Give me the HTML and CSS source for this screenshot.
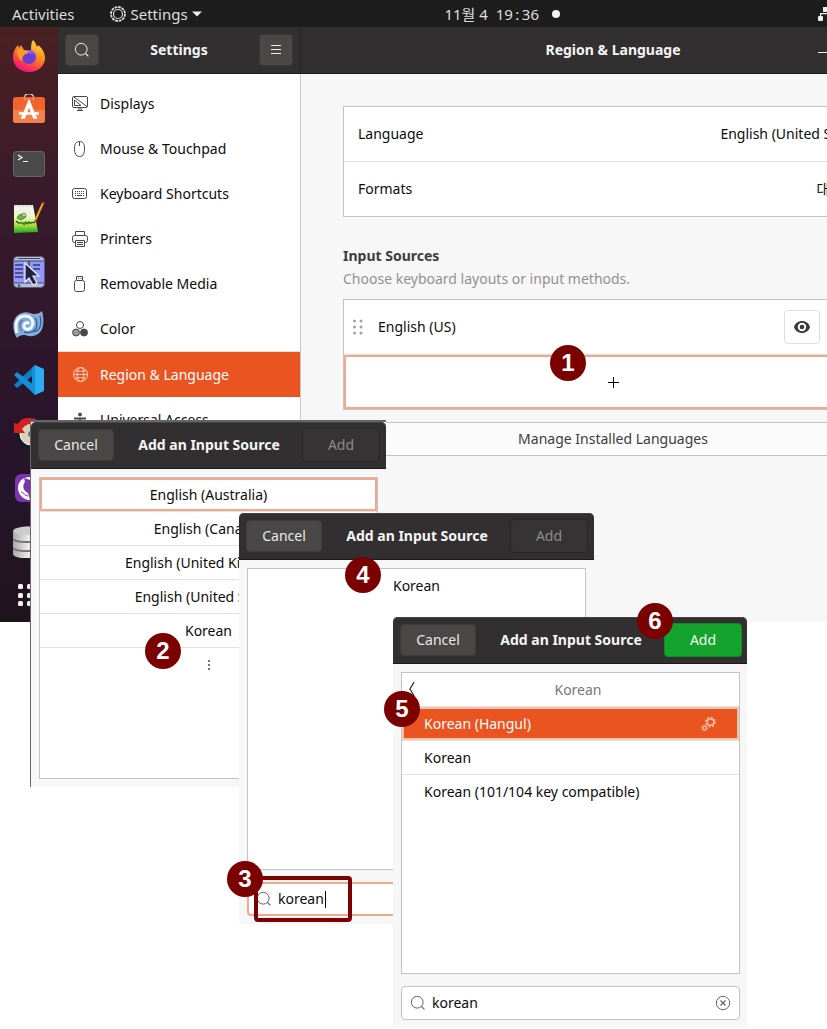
FILE: index.html
```html
<!DOCTYPE html>
<html lang="en">
<head>
<meta charset="utf-8">
<title>Region &amp; Language</title>
<link rel="stylesheet" href="styles.css">
</head>
<body>
<svg class="defs" aria-hidden="true">
  <symbol id="search" viewBox="0 0 16 16"><circle cx="7.2" cy="7.2" r="5.9" fill="none" stroke="currentColor"/><path d="M11.4 11.4l3 3" stroke="currentColor" stroke-width="1.3"/></symbol>
</svg>

<div class="desktop">
  <header class="topbar">
    <div class="topbar-left">
      <span>Activities</span>
      <span class="app-menu">
        <svg width="18" height="18" viewBox="0 0 18 18" fill="none" stroke="#ddd"><circle cx="9" cy="9" r="7" stroke-width="1.800" stroke-dasharray="2.8 0.86"/><circle cx="9" cy="9" r="4.500" stroke-width="1.2"/></svg>
        <span>Settings</span>
        <svg width="10" height="6" viewBox="0 0 10 6"><path d="M0 .5h10L5 5.5z" fill="#eee"/></svg>
      </span>
    </div>
    <div class="clock"><span>11월 4&nbsp; 19&thinsp;:&thinsp;36</span><i class="notice"></i></div>
    <svg class="net" width="16" height="14" viewBox="0 0 16 14" fill="#eee"><rect x="5" y="0" width="6" height="5"/><rect x="0" y="9" width="5" height="5" rx="1"/><rect x="11" y="9" width="5" height="5"/><path d="M2 9V6h12v3h-1.200V7.200H3.200V9z"/></svg>
  </header>

  <div class="workspace">
    <nav class="dock" aria-label="Dock">
      <svg viewBox="0 0 32 32">
        <defs><linearGradient id="fx" x1=".8" y1="0" x2=".3" y2="1"><stop offset="0" stop-color="#ffe43c"/><stop offset=".45" stop-color="#ff8b20"/><stop offset=".75" stop-color="#ff3d4b"/><stop offset="1" stop-color="#e2128b"/></linearGradient></defs>
        <path d="M20 0c2 2 3 4 4 7 1-1 1-2 1-2 4 3 7 8 7 13 0 8-7 14-16 14S0 26 0 17C0 12 2 8 5 5l1 3 2-3 3 5 7 0c0-4 0-7 2-10z" fill="url(#fx)"/>
        <circle cx="16" cy="17" r="7" fill="#6a3fd0"/><path d="M14 11c5-2 9 1 9 5-2-3-5-3-7-2z" fill="#9059ff"/>
        <path d="M4 10c3-1 6 0 7 1l5 0c0 2-3 3-5 4-2 2-2 4-1 6-4-1-6-5-6-11z" fill="#ff9a2a"/>
      </svg>
      <svg viewBox="0 0 32 32">
        <path d="M11 5c0-7 10-7 10 0" fill="none" stroke="#e8c9a0" stroke-width="1.500"/><rect y="3" width="32" height="26" rx="3" fill="#f2642c"/><path d="M0 16h32v10a3 3 0 0 1-3 3H3a3 3 0 0 1-3-3z" fill="#f37f4d"/>
        <path d="M12 4v2M20 4v2" stroke="#e8c9a0"/>
        <path d="M10.500 23L16 9l5.500 14" fill="none" stroke="#fff" stroke-width="3.500"/><path d="M6 19.500h20" stroke="#fff" stroke-width="2.500"/><path d="M8 23.500h4M20 23.500h4" stroke="#fff" stroke-width="2.500"/>
      </svg>
      <svg viewBox="0 0 32 32"><rect x=".5" y="3.500" width="31" height="25" rx="3" fill="#4a4a4a" stroke="#666"/><path d="M5 7l4 2.500L5 12M10 13.500h5" fill="none" stroke="#fff" stroke-width="1.200"/></svg>
      <svg viewBox="0 0 32 32">
        <defs><linearGradient id="np" x1="0" y1="0" x2="0" y2="1"><stop offset="0" stop-color="#f5f5f5"/><stop offset=".45" stop-color="#eef5c8"/><stop offset=".7" stop-color="#b6e040"/><stop offset="1" stop-color="#18a52a"/></linearGradient></defs>
        <path d="M1 3l19 0 5 27-24 1z" fill="url(#np)"/><path d="M2 4h17" stroke="#aaa" stroke-dasharray="1 1"/>
        <path d="M4 16c2-5 8-5 9-1l-5 3z" fill="#58c437" stroke="#29631d" stroke-width=".7"/><path d="M3 19c3 4 6 1 7 2s1 3 2 0 2 3 3 0 2 2 3 0 2 1 4-1" fill="none" stroke="#29631d" stroke-width="1.300"/><circle cx="11" cy="13" r="2" fill="#ccc" stroke="#555" stroke-width=".6"/>
        <path d="M30 1L22 19" stroke="#eca91e" stroke-width="2"/><path d="M22.500 18l-1 3" stroke="#604020"/><path d="M31 0l-1 2" stroke="#c84030" stroke-width="2"/>
      </svg>
      <svg viewBox="0 0 32 32">
        <rect x=".5" y=".5" width="31" height="31" rx="4" fill="#b9bdd0" stroke="#555b80"/><path d="M1 5h30v22H1z" fill="#9297fa"/><path d="M1 5h30M1 27h30" stroke="#414774"/><path d="M5 2.500h22" stroke="#444a66"/>
        <path d="M2 9h8M2 13h8M2 17h8M2 21h8M16 5v6M20 9h7M20 13h7" stroke="#343a66" stroke-width="1.500"/><path d="M12 7v19l4-4 4 7 4-2-4-7h6z" fill="#20243e" stroke="#eef" stroke-width="1.200"/><path d="M5 28l3 2-3 1z" fill="#343a66"/>
      </svg>
      <svg viewBox="0 0 32 32">
        <path d="M4 28C-2 19-1 6 9 3c5-2 9 1 12 1 4 0 6-1 8-3 2 7 2 15-1 20-4 6-12 6-16 4-3 0-5 0-8 3z" fill="#83acd8"/>
        <path d="M4 23C1 12 5 6 12 6c7 0 9 6 7 10-2 5-9 4-8-1 1-3 4-3 5-1" fill="none" stroke="#f2f7ff" stroke-width="3"/><path d="M11 22c8 2 13-2 13-8 0-3-1-5-2-6M27 6c2 8 0 14-6 16" fill="none" stroke="#315f9c" stroke-width="1.300"/><path d="M9 21c-3-4-3-9 1-11" fill="none" stroke="#52749c" stroke-width="1.200"/>
      </svg>
      <svg viewBox="0 0 32 32"><path d="M22 1l9 4v22l-9 4z" fill="#2aabf2"/><path d="M22 1v9L4 24l-3-3z" fill="#0b80c8"/><path d="M22 31v-9L4 8 1 11z" fill="#1490da"/><path d="M22 1v30l-3-3V4z" fill="#178fd8"/></svg>
      <svg viewBox="0 0 32 32"><circle cx="18" cy="17" r="15" fill="#161a20"/><circle cx="18" cy="16" r="11" fill="#d8d0b8" stroke="#fff"/><circle cx="18" cy="16" r="3" fill="#777"/><path d="M1 5v10h11l-3-4c3-4 7-6 12-5l2-5C14-1 8 0 5 6z" fill="#d51f20"/></svg>
      <svg viewBox="0 0 32 32"><rect x="2" y="2" width="30" height="28" rx="6" fill="#7b36ac"/><path d="M17 5C9 5 5 10 5 16s5 12 12 12l-2-7c-5-2-6-8-3-11l-1-4 6 2z" fill="#fff"/><path d="M8 20c3 0 3 4 7 4" stroke="#7b36ac" fill="none"/></svg>
      <svg viewBox="0 0 32 32"><defs><linearGradient id="db"><stop offset="0" stop-color="#aaa"/><stop offset=".5" stop-color="#eee"/><stop offset="1" stop-color="#888"/></linearGradient></defs><path d="M0 5c0-6 32-6 32 0v23c0 6-32 6-32 0z" fill="url(#db)"/><path d="M0 13c3 4 29 4 32 0M0 22c3 4 29 4 32 0" fill="none" stroke="#777" stroke-width="2"/><ellipse cx="16" cy="5" rx="15" ry="4" fill="#ccc"/></svg>
      <svg viewBox="0 0 32 32" fill="#f4f4f4"><g id="dots"><rect x="5" y="4" width="5" height="5" rx="1.500"/><rect x="5" y="13" width="5" height="5" rx="1.500"/><rect x="5" y="21" width="5" height="5" rx="1.500"/></g><use href="#dots" x="9"/><use href="#dots" x="18"/></svg>
    </nav>

    <aside class="sidebar">
      <div class="titlebar">
        <button class="tool" aria-label="Search"><svg width="16" height="16"><use href="#search"/></svg></button>
        <h1>Settings</h1>
        <button class="tool" aria-label="Menu"><svg width="16" height="16" viewBox="0 0 16 16" stroke="#eee"><path d="M3 3.500h10M3 7.500h10M3 11.500h10"/></svg></button>
      </div>
      <ul class="nav">
        <li><a href="#"><svg viewBox="0 0 16 16"><path d="M2 .5h12q1.500 0 1.500 1.500v8q0 1.500-1.500 1.500H2Q.5 11.500.5 10V2Q.5.500 2 .5zM2 1l13 9.500M2.500 4v5.500h6.500zM5 14.500h6M7 11.500v3h2v-3"/></svg>Displays</a></li>
        <li><a href="#"><svg viewBox="0 0 16 16"><path d="M7.500.5c3.500 0 5 2.500 5 6.500 0 5-1 8.500-5 8.500s-5-3.500-5-8.500c0-4 1.500-6.500 5-6.500zM7.500.5V5"/></svg>Mouse &amp; Touchpad</a></li>
        <li><a href="#"><svg viewBox="0 0 16 16"><rect x=".5" y="2.500" width="14" height="10" rx="2"/><path d="M3 5.500h10M3 7.500h10" stroke-dasharray="1 1"/><path d="M3 9.500h1M5 9.500h5M11 9.500h1"/></svg>Keyboard Shortcuts</a></li>
        <li><a href="#"><svg viewBox="0 0 16 16"><path d="M3.500 4V.5h9V4M3.500 11.500h-1Q.5 11.500.5 9.500v-3q0-2 2-2h11q2 0 2 2v3q0 2-2 2h-1M3.500 9.500h9v6h-9zM5 11.500h6M5 13.500h6"/></svg>Printers</a></li>
        <li><a href="#"><svg viewBox="0 0 16 16"><path d="M4.500 4V.5h6V4M6 2.500h1M8.500 2.500h1"/><rect x="2.500" y="4.500" width="10" height="11" rx="2"/></svg>Removable Media</a></li>
        <li><a href="#"><svg viewBox="0 0 16 16"><circle cx="8" cy="4" r="3.500"/><circle cx="4" cy="11.500" r="3.500" fill="#999"/><circle cx="12" cy="11.500" r="3.500" fill="#484848"/></svg>Color</a></li>
        <li class="current"><a href="#" aria-current="page"><svg viewBox="0 0 16 16"><circle cx="8.500" cy="7.500" r="7"/><ellipse cx="8.500" cy="7.500" rx="3.500" ry="7"/><path d="M1.500 7.500h14M3 3.500q5.500 2 11 0M3 11.500q5.500-2 11 0"/></svg>Region &amp; Language</a></li>
        <li><a href="#"><svg viewBox="0 0 16 16"><circle cx="8" cy="2.500" r="1.500" fill="#484848"/><path d="M2 6.500h12M8 6v4l-3 5M8 10l3 5" stroke-width="2"/></svg>Universal Access</a></li>
      </ul>
    </aside>

    <main class="panel">
      <div class="titlebar">
        <h2>Region &amp; Language</h2>
        <button class="minimize" aria-label="Minimize"></button>
      </div>
      <div class="content">
        <div class="card">
          <div class="row"><span>Language</span><span>English (United States)</span></div>
          <div class="row"><span>Formats</span><span>대한민국</span></div>
        </div>
        <h3>Input Sources</h3>
        <p class="hint">Choose keyboard layouts or input methods.</p>
        <div class="card">
          <div class="row source">
            <svg width="10" height="16" viewBox="0 0 10 16" fill="#a3a3a3"><circle cx="1.500" cy="2" r="1.500"/><circle cx="8" cy="2" r="1.500"/><circle cx="1.500" cy="8" r="1.500"/><circle cx="8" cy="8" r="1.500"/><circle cx="1.500" cy="14" r="1.500"/><circle cx="8" cy="14" r="1.500"/></svg>
            <span>English (US)</span>
            <button class="eye" aria-label="Show layout"><svg width="16" height="16" viewBox="0 0 16 16"><path fill="#3a3a3a" fill-rule="evenodd" d="M8 2c4 0 7 2.500 8 6-1 3.500-4 6-8 6s-7-2.500-8-6c1-3.500 4-6 8-6zm0 1.800a4.200 4.200 0 1 0 0 8.400 4.200 4.200 0 0 0 0-8.400z"/><circle cx="8" cy="8" r="2.300" fill="#3a3a3a"/></svg></button>
          </div>
          <button class="row add-source" aria-label="Add input source"><svg width="12" height="12" viewBox="0 0 12 12"><path d="M6.500 1v11M1 6.500h11" stroke="#000"/></svg></button>
        </div>
        <button class="manage">Manage Installed Languages</button>
      </div>
    </main>
  </div>
</div>

<section class="dialog first">
  <header><button class="btn">Cancel</button><h2>Add an Input Source</h2><button class="btn wide" disabled>Add</button></header>
  <div class="dialog-body">
    <ul class="list">
      <li class="focused">English (Australia)</li>
      <li>English (Canada)</li>
      <li>English (United Kingdom)</li>
      <li>English (United States)</li>
      <li>Korean</li>
      <li class="more"><svg width="2" height="10" viewBox="0 0 2 10" fill="#777"><path d="M0 0h2v2H0zM0 4h2v2H0zM0 8h2v2H0z"/></svg></li>
    </ul>
  </div>
</section>

<section class="dialog second">
  <header><button class="btn">Cancel</button><h2>Add an Input Source</h2><button class="btn wide" disabled>Add</button></header>
  <div class="dialog-body">
    <ul class="list"><li>Korean</li></ul>
    <label class="entry active"><svg width="16" height="16"><use href="#search"/></svg><input type="text" value="korean" size="4" aria-label="Search input sources"><i class="caret"></i></label>
  </div>
</section>

<section class="dialog third">
  <header><button class="btn">Cancel</button><h2>Add an Input Source</h2><button class="btn wide suggested">Add</button></header>
  <div class="dialog-body">
    <ul class="list variants">
      <li class="group"><svg width="8" height="16" viewBox="0 0 8 16" fill="none" stroke="#222" stroke-width="1.200"><path d="M5 0Q3 4 .8 7 3 10 5 14"/></svg><span>Korean</span></li>
      <li class="selected"><span>Korean (Hangul)</span>
        <svg width="16" height="16" viewBox="0 0 16 16" fill="none" stroke="#f9c3ad"><circle cx="9.500" cy="6" r="3.300" stroke-width="1.500"/><circle cx="9.500" cy="6" r="4.700" stroke-width="1.500" stroke-dasharray="1.800 1.890"/><circle cx="3.500" cy="12" r="1.800" stroke-width="1.200"/><circle cx="3.500" cy="12" r="2.900" stroke-dasharray="1.100 1.180"/></svg></li>
      <li>Korean</li>
      <li>Korean (101/104 key compatible)</li>
    </ul>
    <label class="entry"><svg width="16" height="16"><use href="#search"/></svg><input type="text" value="korean" aria-label="Search layouts"><button class="clear" aria-label="Clear"><svg width="16" height="16" viewBox="0 0 16 16" fill="none" stroke="#666"><circle cx="8" cy="8" r="6.700"/><path d="M5.500 5.500l5 5M10.500 5.500l-5 5" stroke-width="1.200"/></svg></button></label>
  </div>
</section>

<div class="highlight"></div>
<span class="badge b1">1</span>
<span class="badge b2">2</span>
<span class="badge b3">3</span>
<span class="badge b4">4</span>
<span class="badge b5">5</span>
<span class="badge b6">6</span>
</body>
</html>
```
FILE: styles.css
```css
* { box-sizing: border-box; }
body {
  margin: 0;
  position: relative;
  min-height: 100vh;
  overflow-x: hidden;
  background: #fff;
  color: #0c0c0c;
  font: 14px/20px "Noto Sans", "Noto Sans CJK KR", sans-serif;
}
button, input { font: inherit; color: inherit; margin: 0; padding: 0; }
h1, h2, h3, p, ul { margin: 0; padding: 0; font-size: 14px; }
ul { list-style: none; }
a { color: inherit; text-decoration: none; }
svg { display: block; flex: none; }
.defs { position: absolute; width: 0; height: 0; }

.desktop { height: 622px; display: flex; flex-direction: column; overflow: hidden; }
.topbar {
  display: flex;
  justify-content: space-between;
  align-items: center;
  flex: none;
  height: 27px;
  padding-left: 12px;
  background: #1d1d1d;
  color: #dedede;
  font-size: 15px;
  overflow: hidden;
}
.topbar-left, .app-menu, .clock { display: flex; align-items: center; }
.topbar-left { gap: 34px; flex: 1; }
.app-menu { gap: 4px; }
.clock { gap: 13px; }
.notice { width: 8px; height: 8px; border-radius: 50%; background: #f2f2f2; }
.net { margin: 0 -7px 0 258px; }

.workspace { display: flex; flex: 1; min-height: 0; }
.dock {
  display: flex;
  flex-direction: column;
  align-items: center;
  gap: 22px;
  flex: none;
  width: 58px;
  padding-top: 13px;
  background: linear-gradient(#4a2022, #3a1b2b 28%, #2d162b 55%, #25152a 78%, #20141c);
}
.dock svg { width: 32px; height: 32px; }

.titlebar {
  display: flex;
  align-items: center;
  justify-content: space-between;
  flex: none;
  height: 47px;
  padding: 0 7px;
  background: #322f30;
  border-bottom: 1px solid #1b1a1a;
  color: #f5f5f5;
}
.tool {
  display: grid;
  place-items: center;
  width: 34px;
  height: 32px;
  border: 1px solid #3d3b3a;
  border-radius: 4px;
  background: #4a4846;
  color: #eee;
}
.sidebar { width: 243px; flex: none; background: #fff; border-right: 1px solid #c8c8c8; }
.sidebar .titlebar { margin-right: -1px; border-right: 1px solid #242223; }
.nav { padding-top: 7px; }
.nav a { display: flex; align-items: center; gap: 12px; height: 45px; padding-left: 14px; }
.nav svg { width: 16px; height: 16px; fill: none; stroke: #484848; }
.nav .current { border-top: 1px solid #dfdfdf; background: #e95420; color: #fff; }
.nav .current svg { stroke: #fbd0bd; }

.panel { flex: 1 0 624px; background: #f7f7f7; }
.panel .titlebar { justify-content: center; position: relative; }
.minimize {
  position: absolute;
  left: 517px;
  top: 25px;
  width: 10px;
  height: 1px;
  border: 0;
  background: #eee;
}
.content { padding: 32px 42px; }
.content h3 { margin-top: 29px; color: #3d3d3d; line-height: 20px; }
.hint { padding: 3px 0 10px; color: #929292; }
.card { border: 1px solid #c3c3c3; background: #fff; }
.row {
  display: flex;
  align-items: center;
  justify-content: space-between;
  width: 100%;
  height: 54px;
  padding: 0 14px;
  border: 0;
}
.row + .row { border-top: 1px solid #dedede; height: 55px; }
.source { gap: 15px; padding: 0 62px 0 9px; justify-content: flex-start; }
.eye {
  display: grid;
  place-items: center;
  width: 36px;
  height: 34px;
  margin-left: auto;
  border: 1px solid #dedede;
  border-radius: 4px;
  background: #fff;
}
.row.add-source { justify-content: center; background: #fff; box-shadow: inset 0 0 0 2px #f4a78c; }
.manage {
  width: 100%;
  height: 34px;
  margin-top: 12px;
  border: 1px solid #c3c3c3;
  border-radius: 4px;
  background: #fbfbfb;
  color: #3d3d3d;
}

.dialog { position: absolute; width: 355px; background: #f7f7f7; }
.first { left: 30px; top: 420px; width: 356px; border: solid #666; border-width: 2px 0 0 1px; }
.second { left: 239px; top: 513px; }
.third { left: 393px; top: 617px; width: 354px; }
.dialog header {
  display: grid;
  grid-template-columns: 1fr auto 1fr;
  align-items: center;
  height: 47px;
  padding: 0 6px 0 7px;
  border-bottom: 1px solid #1b1a1a;
  border-radius: 5px 5px 0 0;
  background: #322f30;
  box-shadow: inset 0 1px #444;
  color: #f5f5f5;
}
.third header { padding-right: 5px; }
.btn {
  width: 76px;
  height: 32px;
  border: 1px solid #3d3b3a;
  border-radius: 4px;
  background: #4a4846;
  color: #e8e8e8;
}
.btn.wide { width: 78px; height: 34px; justify-self: end; }
.btn:disabled { background: #363334; border-color: #262425; color: #8c8b8a; }
.btn.suggested { background: #14a32c; border-color: #118c25; color: #f0fff0; }
.dialog-body { display: flex; flex-direction: column; gap: 12px; padding: 8px; }
.third .dialog-body { padding: 8px 7px 7px 8px; }
.list { height: 302px; border: 1px solid #c3c3c3; background: #fff; }
.list li {
  display: flex;
  align-items: center;
  justify-content: center;
  height: 34px;
  border-bottom: 1px solid #e2e2e2;
}
.list li:last-child { border-bottom: 0; }
.list .focused { box-shadow: inset 0 0 0 2px #f4a78c; }
.variants li { justify-content: space-between; padding: 0 22px; }
.list .group { gap: 7px; padding: 0 0 0 7px; color: #777; }
.group span { flex: 1; padding-right: 7px; text-align: center; }
.variants .selected { background: #e95420; color: #fff; box-shadow: inset 0 0 0 2px #f8c4b0; }
.entry {
  display: flex;
  align-items: center;
  gap: 6px;
  height: 34px;
  padding: 0 8px;
  border: 1px solid #c3c3c3;
  border-radius: 4px;
  background: #fff;
}
.entry > svg { color: #666; }
.entry.active { border: 2px solid #f4a78c; padding-left: 7px; }
.entry input { flex: 1; min-width: 0; border: 0; outline: 0; background: none; }
.entry.active input { flex: 0 0 47px; width: 47px; }
.caret { width: 1px; height: 17px; margin-left: -6px; background: #000; }
.clear { border: 0; background: none; }

.highlight {
  position: absolute;
  left: 254px;
  top: 876px;
  width: 98px;
  height: 46px;
  border: 4px solid #7b0000;
  border-radius: 4px;
}
.badge {
  position: absolute;
  width: 36px;
  height: 36px;
  border-radius: 50%;
  background: #7b0000;
  color: #fff;
  font: bold 24px/36px "Liberation Sans", Arial, sans-serif;
  text-align: center;
}
.b1 { left: 550px; top: 345px; }
.b2 { left: 145px; top: 633px; }
.b3 { left: 227px; top: 861px; }
.b4 { left: 345px; top: 557px; }
.b5 { left: 384px; top: 691px; }
.b6 { left: 637px; top: 603px; }
```
